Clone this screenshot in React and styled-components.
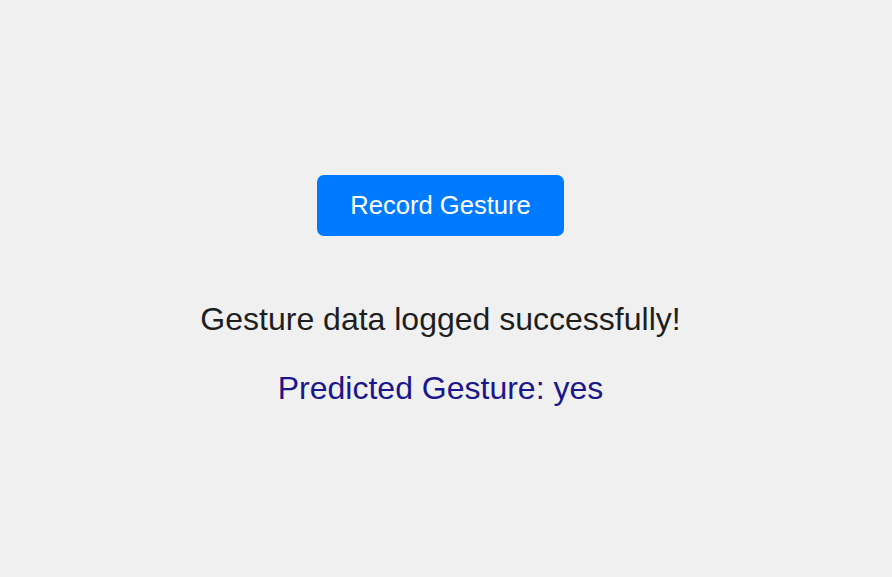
import React from 'react';
import styled, { createGlobalStyle } from 'styled-components';

const GlobalStyle = createGlobalStyle`
  html, body {
    margin: 0;
    padding: 0;
    background: #f0f0f0;
    font-family: "Liberation Sans", Arial, sans-serif;
  }
`;

const Wrapper = styled.div`
  display: flex;
  flex-direction: column;
  align-items: center;
  min-height: 100vh;
  box-sizing: border-box;
  padding: 175px 11px 0 0;
  text-align: center;
`;

const RecordButton = styled.button`
  font-family: "Liberation Sans", Arial, sans-serif;
  font-size: 25.6px;
  line-height: 29px;
  color: #ffffff;
  background: #007bff;
  border: none;
  border-radius: 7px;
  padding: 16px 33px;
  margin: 0 0 33px;
  cursor: pointer;
`;

const Messages = styled.div`
  display: block;
`;

const Message = styled.p`
  font-size: 32px;
  line-height: 36.8px;
  margin: 32px 0;
  color: ${(p) => p.color || '#1e1e1e'};
`;

const App = () => {
  return (
    <>
      <GlobalStyle />
      <Wrapper>
        <RecordButton>Record Gesture</RecordButton>
        <Messages>
          <Message>Gesture data logged successfully!</Message>
          <Message color="#1c168c">Predicted Gesture: yes</Message>
        </Messages>
      </Wrapper>
    </>
  );
};

export default App;
